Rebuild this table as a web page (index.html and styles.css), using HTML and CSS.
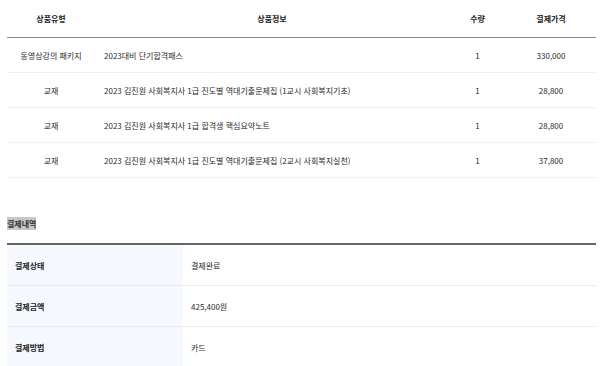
FILE: index.html
```html
<!DOCTYPE html>
<html lang="ko">
<head>
<meta charset="utf-8">
<link rel="stylesheet" href="styles.css">
</head>
<body>
<div class="page">
  <table class="orders">
    <colgroup>
      <col class="c-type"><col class="c-info"><col class="c-qty"><col class="c-price">
    </colgroup>
    <thead>
      <tr><th>상품유형</th><th>상품정보</th><th>수량</th><th>결제가격</th></tr>
    </thead>
    <tbody>
      <tr><td>동영상강의 패키지</td><td class="info">2023대비 단기합격패스</td><td>1</td><td>330,000</td></tr>
      <tr><td>교재</td><td class="info">2023 김진원 사회복지사 1급 진도별 역대기출문제집 (1교시 사회복지기초)</td><td>1</td><td>28,800</td></tr>
      <tr><td>교재</td><td class="info">2023 김진원 사회복지사 1급 합격생 핵심요약노트</td><td>1</td><td>28,800</td></tr>
      <tr><td>교재</td><td class="info">2023 김진원 사회복지사 1급 진도별 역대기출문제집 (2교시 사회복지실천)</td><td>1</td><td>37,800</td></tr>
    </tbody>
  </table>

  <h3 class="section-title"><span class="hl">결제내역</span></h3>

  <table class="pay">
    <tbody>
      <tr><th>결제상태</th><td>결제완료</td></tr>
      <tr><th>결제금액</th><td>425,400원</td></tr>
      <tr><th>결제방법</th><td>카드</td></tr>
    </tbody>
  </table>
</div>
</body>
</html>
```

FILE: styles.css
```css
html, body {
  margin: 0;
  padding: 0;
  background: #fff;
}
body {
  font-family: "Noto Sans CJK KR", "Noto Sans", sans-serif;
  font-size: 8px;
  color: #2a2a2a;
}
.page {
  margin-left: 7px;
  width: 589px;
}
table {
  border-collapse: collapse;
  width: 100%;
  table-layout: fixed;
}
.c-type { width: 88px; }
.c-info { width: 354px; }
.c-qty { width: 57px; }
.c-price { width: 90px; }

.orders th {
  height: 37px;
  padding: 0;
  font-weight: 700;
  color: #222;
  text-align: center;
  border-bottom: 1px solid #8a8a8a;
}
.orders td {
  height: 34px;
  padding: 0;
  text-align: center;
  border-bottom: 1px solid #f0f0f0;
}
.orders td.info {
  text-align: left;
  padding-left: 9px;
}

.section-title {
  margin: 0;
  padding-top: 39px;
  height: 26px;
  font-size: 8px;
  font-weight: 700;
  line-height: 13px;
}
.hl {
  background: #c8c8c8;
  color: #333;
  display: inline-block;
}

.pay {
  border-top: 2px solid #666;
}
.pay th {
  width: 168px;
  background: #f6f9fe;
  text-align: left;
  padding: 0 0 0 8px;
  font-weight: 700;
  color: #222;
  height: 40px;
  border-bottom: 1px solid #ececec;
}
.pay td {
  padding: 0 0 0 8px;
  height: 40px;
  border-bottom: 1px solid #ececec;
}
```
